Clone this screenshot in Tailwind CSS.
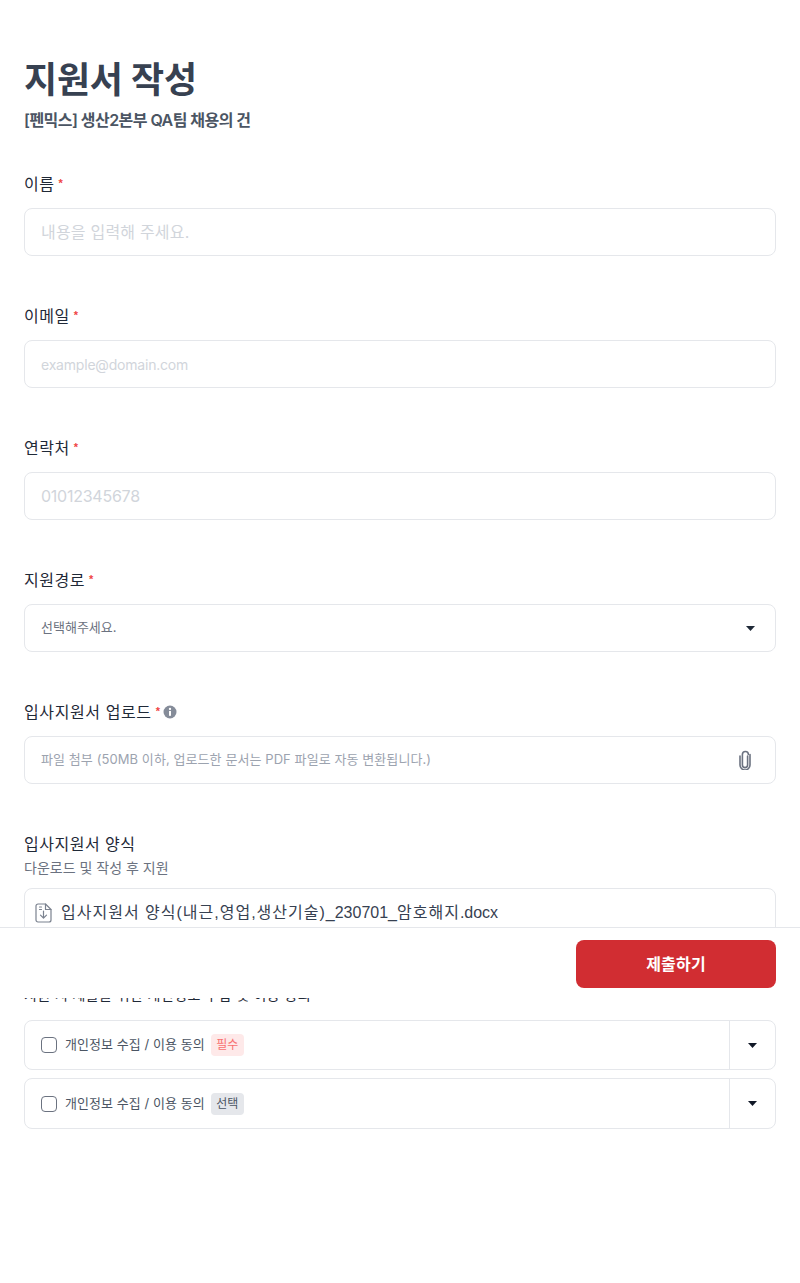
<!DOCTYPE html>
<html lang="ko">
<head>
<meta charset="utf-8">
<script src="https://cdn.jsdelivr.net/npm/@tailwindcss/browser@4"></script>
</head>
<body class="bg-white font-['Inter','Noto_Sans_CJK_KR',sans-serif] text-[#111827]">
<div class="relative h-[1283px] overflow-hidden">
  <main class="px-6 pt-[54px]">
    <h1 class="text-[36px] leading-[52px] font-bold text-[#374151] tracking-[-0.2px]">지원서 작성</h1>
    <p class="mt-[2px] text-[16px] leading-[24px] font-semibold text-[#4b5563] tracking-[-0.55px]">[펜믹스] 생산2본부 QA팀 채용의 건</p>

    <section class="mt-[40px]">
      <div class="flex items-start h-6 text-[16px] leading-6 text-[#1f2937] tracking-[0.5px]">이름<span class="ml-1 text-[#ef4444] text-[11px] leading-[23px] font-bold font-['Liberation_Sans']">*</span></div>
      <div class="mt-3 h-12 rounded-lg border border-[#e5e7eb] px-4 flex items-center text-[16px] text-[#d1d5db] tracking-[0.2px]">내용을 입력해 주세요.</div>
    </section>
    <section class="mt-[48px]">
      <div class="flex items-start h-6 text-[16px] leading-6 text-[#1f2937] tracking-[0.5px]">이메일<span class="ml-1 text-[#ef4444] text-[11px] leading-[23px] font-bold font-['Liberation_Sans']">*</span></div>
      <div class="mt-3 h-12 rounded-lg border border-[#e5e7eb] px-4 flex items-center text-[14px] text-[#d1d5db] tracking-[-0.2px]">example@domain.com</div>
    </section>
    <section class="mt-[48px]">
      <div class="flex items-start h-6 text-[16px] leading-6 text-[#1f2937] tracking-[0.5px]">연락처<span class="ml-1 text-[#ef4444] text-[11px] leading-[23px] font-bold font-['Liberation_Sans']">*</span></div>
      <div class="mt-3 h-12 rounded-lg border border-[#e5e7eb] px-4 flex items-center text-[16px] text-[#d1d5db] tracking-[-0.25px]">01012345678</div>
    </section>
    <section class="mt-[48px]">
      <div class="flex items-start h-6 text-[16px] leading-6 text-[#1f2937] tracking-[0.5px]">지원경로<span class="ml-1 text-[#ef4444] text-[11px] leading-[23px] font-bold font-['Liberation_Sans']">*</span></div>
      <div class="mt-3 h-12 rounded-lg border border-[#e5e7eb] pl-4 pr-5 flex items-center justify-between text-[13px] text-[#6b7280]">
        <span>선택해주세요.</span>
        <svg class="w-[9px] h-[5px]" viewBox="0 0 9 5"><path d="M0 0h9L4.5 5z" fill="#1f2937"/></svg>
      </div>
    </section>
    <section class="mt-[48px]">
      <div class="flex items-start h-6 text-[16px] leading-6 text-[#1f2937] tracking-[0.6px]">입사지원서 업로드<span class="ml-1 text-[#ef4444] text-[11px] leading-[23px] font-bold font-['Liberation_Sans']">*</span>
        <svg class="ml-[2px] mt-[5px] w-[14px] h-[14px]" viewBox="0 0 14 14"><circle cx="7" cy="7" r="6.5" fill="#858c99"/><rect x="6" y="6" width="2" height="4.8" fill="#fff"/><circle cx="7" cy="4" r="1.15" fill="#fff"/></svg>
      </div>
      <div class="mt-3 h-12 rounded-lg border border-[#e5e7eb] pl-4 pr-[22px] flex items-center justify-between text-[13px] text-[#9ca3af] tracking-[0.08px]">
        <span>파일 첨부 (50MB 이하, 업로드한 문서는 PDF 파일로 자동 변환됩니다.)</span>
        <svg class="w-4 h-5 -mt-[1px]" viewBox="0 0 16 20" fill="none" stroke="#6b7280" stroke-width="1.6" stroke-linecap="round"><path d="M10.6 6v9a2.6 2.6 0 0 1-5.2 0V4.5a3 3 0 0 1 6 0"/><path d="M3 6v9a5 5 0 0 0 10 0V4.5"/></svg>
      </div>
    </section>
    <section class="mt-[48px]">
      <div class="h-6 text-[16px] leading-6 text-[#1f2937] tracking-[0.5px]">입사지원서 양식</div>
      <div class="h-6 text-[14px] leading-6 text-[#6b7280]">다운로드 및 작성 후 지원</div>
      <div class="mt-2 h-[49px] rounded-lg border border-[#e5e7eb] px-[10px] pt-[1px] flex items-center gap-[9px] text-[16px] text-[#374151] font-['Liberation_Sans','Noto_Sans_CJK_KR',sans-serif]">
        <svg class="w-[17px] h-5 shrink-0" viewBox="0 0 17 20" fill="none" stroke="#7b828f" stroke-width="1.2" stroke-linecap="round" stroke-linejoin="round"><path d="M3 1h7.5L16 6.5V17a2 2 0 0 1-2 2H3a2 2 0 0 1-2-2V3a2 2 0 0 1 2-2z"/><path d="M10.5 1v5.5H16"/><path d="M8.5 8v7M5.5 12.2l3 3 3-3"/><path d="M4.5 4h2M4.5 6.5h2"/></svg>
        <span class="tracking-[1px]">입사지원서 양식(내근,영업,생산기술)<span class="tracking-normal">_230701_</span>암호해지<span class="tracking-normal">.docx</span></span>
      </div>
    </section>
    <section class="mt-[47px]">
      <div class="h-6 text-[14px] leading-[21px] text-[#1f2937] tracking-[0.4px]">지원 시 제출을 위한 개인정보 수집 및 이용 동의</div>
      <div class="mt-3 flex flex-col gap-2">
        <div class="h-[50px] rounded-lg border border-[#e5e7eb] flex items-center">
          <div class="flex-1 pl-4 flex items-center gap-2 text-[13px] text-[#4b5563]">
            <span class="w-4 h-4 rounded border border-[#6b7280]"></span>
            <span class="tracking-[0.05px]">개인정보 수집 / 이용 동의</span>
            <span class="-ml-[2px] w-[33px] h-[22px] text-center rounded bg-[#fee9e9] text-[#f87171] text-[12px] leading-[22px]">필수</span>
          </div>
          <div class="w-[46px] h-full border-l border-[#e5e7eb] flex items-center justify-center">
            <svg class="w-[9px] h-[5px]" viewBox="0 0 9 5"><path d="M0 0h9L4.5 5z" fill="#111827"/></svg>
          </div>
        </div>
        <div class="h-[51px] rounded-lg border border-[#e5e7eb] flex items-center">
          <div class="flex-1 pl-4 flex items-center gap-2 text-[13px] text-[#4b5563]">
            <span class="w-4 h-4 rounded border border-[#6b7280]"></span>
            <span class="tracking-[0.05px]">개인정보 수집 / 이용 동의</span>
            <span class="-ml-[2px] w-[33px] h-[22px] text-center rounded bg-[#e5e7eb] text-[#4b5563] text-[12px] leading-[22px]">선택</span>
          </div>
          <div class="w-[46px] h-full border-l border-[#e5e7eb] flex items-center justify-center">
            <svg class="w-[9px] h-[5px]" viewBox="0 0 9 5"><path d="M0 0h9L4.5 5z" fill="#111827"/></svg>
          </div>
        </div>
      </div>
    </section>
  </main>
  <footer class="absolute left-0 right-0 top-[927px] h-[71px] bg-white border-t border-[#e5e7eb] flex justify-end pt-3 pr-6">
    <button class="w-[200px] h-12 rounded-lg bg-[#d12d32] text-white text-[16px] font-semibold tracking-[0.2px]">제출하기</button>
  </footer>
</div>
</body>
</html>
